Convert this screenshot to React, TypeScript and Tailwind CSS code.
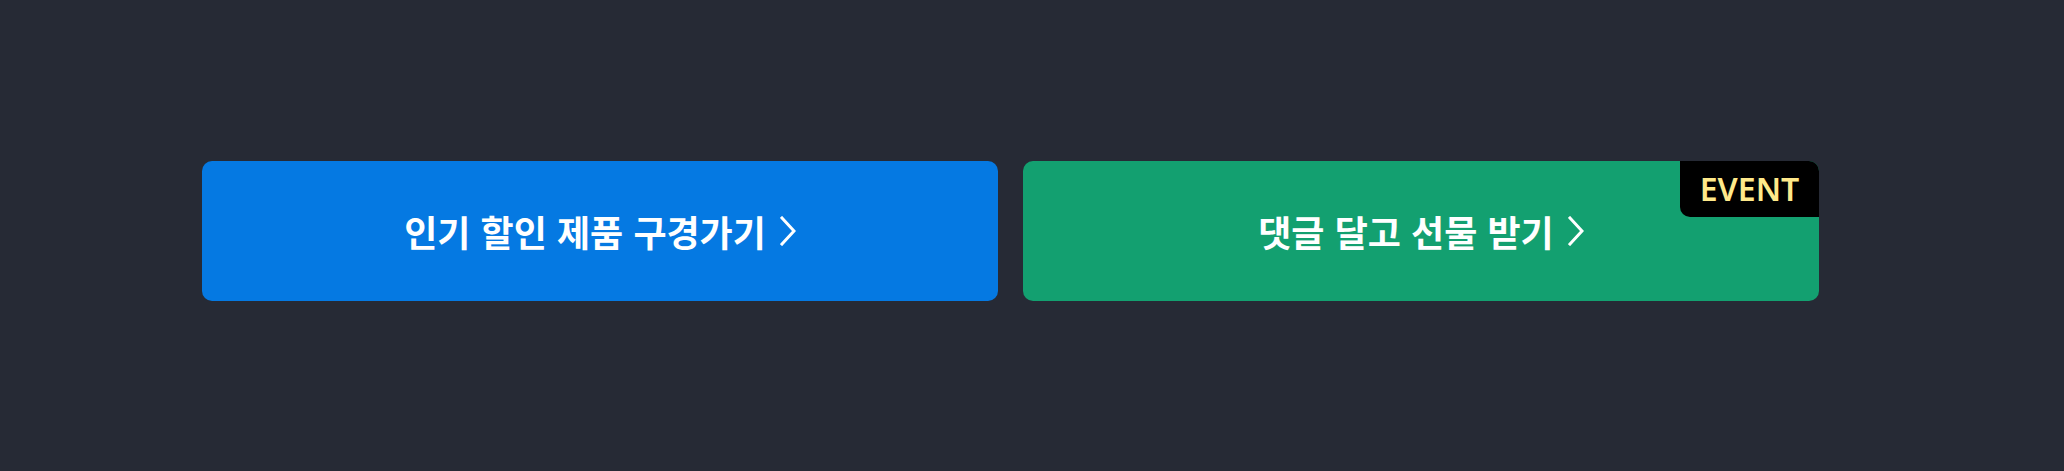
import React from "react";

function Chevron() {
  return (
    <svg width="16" height="30" viewBox="0 0 16 30" fill="none" className="shrink-0">
      <path d="M2 2 L14 15 L2 28" stroke="white" strokeWidth="3" strokeLinecap="square" strokeLinejoin="miter" />
    </svg>
  );
}

export default function App() {
  return (
    <div
      className="w-[2064px] h-[471px] bg-[#262a35] pl-[202px] pt-[161px]"
      style={{ fontFamily: '"Noto Sans CJK KR", "Noto Sans", sans-serif' }}
    >
      <div className="flex gap-[25px]">
        <button className="w-[796px] h-[140px] rounded-[10px] bg-[#0579e2] flex items-center justify-center gap-[14px] text-white text-[36px] font-bold [word-spacing:2px]">
          <span>인기 할인 제품 구경가기</span>
          <Chevron />
        </button>
        <button className="relative w-[796px] h-[140px] rounded-[10px] bg-[#13a070] flex items-center justify-center gap-[14px] text-white text-[36px] font-bold [word-spacing:2px]">
          <span>댓글 달고 선물 받기</span>
          <Chevron />
          <span className="absolute top-0 right-0 w-[139px] h-[56px] bg-black rounded-tr-[10px] rounded-bl-[10px] flex items-center justify-center text-[#ffe98a] text-[32px] font-semibold [word-spacing:0px]" style={{ fontFamily: '"Noto Sans", sans-serif' }}>
            EVENT
          </span>
        </button>
      </div>
    </div>
  );
}
